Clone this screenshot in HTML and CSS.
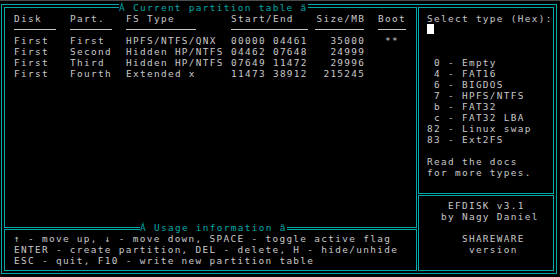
FILE: index.html
```html
<!DOCTYPE html>
<html lang="en">
<head>
    <meta charset="UTF-8">
    <meta name="viewport" content="width=device-width, initial-scale=1.0">
    <title>EFDISK v3.1</title>
    <link rel="stylesheet" href="styles.css">
</head>
<body>
    <div class="screen">
        <div class="frame">
            <div class="col-left">
                <section class="box box-table">
                    <span class="box-title">Á Current partition table ã</span>
                    <div class="ptable">
                        <div>Disk</div><div>Part.</div><div>FS Type</div><div>Start/End</div><div class="num">Size/MB</div><div>Boot</div>
                        <div><i class="rule rule-6"></i></div><div><i class="rule rule-6"></i></div><div><i class="rule rule-10"></i></div><div><i class="rule rule-11"></i></div><div><i class="rule rule-7"></i></div><div><i class="rule rule-4"></i></div>
                        <div>First</div><div>First</div><div>HPFS/NTFS/QNX</div><div>00000 04461</div><div class="num">35000</div><div> **</div>
                        <div>First</div><div>Second</div><div>Hidden HP/NTFS</div><div>04462 07648</div><div class="num">24999</div><div></div>
                        <div>First</div><div>Third</div><div>Hidden HP/NTFS</div><div>07649 11472</div><div class="num">29996</div><div></div>
                        <div>First</div><div>Fourth</div><div>Extended x</div><div>11473 38912</div><div class="num">215245</div><div></div>
                    </div>
                </section>
                <section class="box box-usage">
                    <span class="box-title">Á Usage information ã</span>
                    <div class="ln">↑ - move up, ↓ - move down, SPACE - toggle active flag</div>
                    <div class="ln">ENTER - create partition, DEL - delete, H - hide/unhide</div>
                    <div class="ln">ESC - quit, F10 - write new partition table</div>
                </section>
            </div>
            <div class="col-right">
                <section class="box box-types">
                    <div class="ln">Select type (Hex):</div>
                    <div class="cursor-row"><span class="cursor"></span></div>
                    <div class="types">
                        <div class="ln"> 0 - Empty</div>
                        <div class="ln"> 4 - FAT16</div>
                        <div class="ln"> 6 - BIGDOS</div>
                        <div class="ln"> 7 - HPFS/NTFS</div>
                        <div class="ln"> b - FAT32</div>
                        <div class="ln"> c - FAT32 LBA</div>
                        <div class="ln">82 - Linux swap</div>
                        <div class="ln">83 - Ext2FS</div>
                    </div>
                    <div class="note">
                        <div class="ln">Read the docs</div>
                        <div class="ln">for more types.</div>
                    </div>
                </section>
                <section class="box box-about">
                    <div class="ln">   EFDISK v3.1</div>
                    <div class="ln">  by Nagy Daniel</div>
                    <div class="ln"> </div>
                    <div class="ln">     SHAREWARE</div>
                    <div class="ln">      version</div>
                </section>
            </div>
        </div>
    </div>
</body>
</html>
```

FILE: styles.css
```css
/* Text mode screen: 80 x 25 cells of 7 x 11 px */
body {
    margin: 0;
    background-color: #000;
    font-family: "DejaVu Sans Mono", monospace;
    font-size: 9.4px;
    letter-spacing: 1.34px; /* 5.66px glyph advance + 1.34 = 7px cell */
    line-height: 11px;
    color: #c8c8c8;
}

.screen {
    width: 560px;
    height: 277px;
    box-sizing: border-box;
    border-top: 1px solid #4d4d4d;
    padding: 3px 3px 3px 1px;
}

/* Outer line plus the four boxes make the double frame */
.frame {
    height: 100%;
    box-sizing: border-box;
    border: 1px solid #00a8a8;
    padding: 2px;
    display: flex;
    gap: 1px;
}

.col-left {
    width: 413px;
    display: flex;
    flex-direction: column;
    gap: 1px;
}

.col-right {
    flex: 1;
    display: flex;
    flex-direction: column;
    gap: 1px;
}

.box {
    position: relative;
    box-sizing: border-box;
    border: 1px solid #00a8a8;
}

.box-table {
    height: 221px;
    padding: 5px 0 0 9px;
}

.box-usage {
    flex: 1;
    padding: 3px 0 0 9px;
}

.box-types {
    height: 187px;
    padding: 5px 0 0 8px;
}

.box-about {
    flex: 1;
    padding: 4px 0 0 8px;
}

/* Titles sit on top of the border lines */
.box-title {
    position: absolute;
    z-index: 1;
    background-color: #000;
    color: #00a8a8;
    white-space: pre;
}

.box-table .box-title {
    top: -6px;
    left: 114px;
}

.box-usage .box-title {
    top: -8px;
    left: 135px;
}

.ln {
    white-space: pre;
    height: 11px;
}

/* Partition table */
.ptable {
    display: grid;
    grid-template-columns: 56px 56px 105px 84px 63px 28px;
    grid-auto-rows: 11px;
    white-space: pre;
}

.ptable .num {
    text-align: right;
    padding-right: 12.7px;
}

.rule {
    display: block;
    height: 1px;
    margin-top: 5px;
    background-color: #c8c8c8;
}

.rule-4 { width: 28px; }
.rule-6 { width: 42px; }
.rule-7 { width: 49px; }
.rule-10 { width: 70px; }
.rule-11 { width: 77px; }

/* Type picker */
.cursor-row {
    height: 11px;
}

.cursor {
    display: block;
    width: 7px;
    height: 10px;
    background-color: #fff;
}

.types {
    margin-top: 22px;
}

.note {
    margin-top: 11px;
}
```
